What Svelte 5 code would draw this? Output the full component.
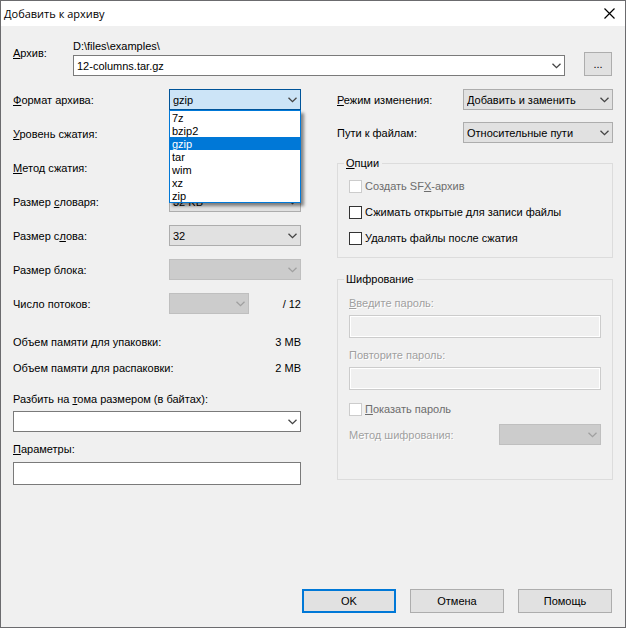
<script>
  const formats = ['7z', 'bzip2', 'gzip', 'tar', 'wim', 'xz', 'zip'];
  let format = $state('gzip');
  let archive = $state('12-columns.tar.gz');
  let volume = $state('');
  let parameters = $state('');
</script>

{#snippet chevron()}
  <svg class="chevron" viewBox="0 0 9 6" aria-hidden="true"><path d="M0.5 0.7 L4.5 4.7 L8.5 0.7" /></svg>
{/snippet}

<div class="window">
  <header>
    <h1>Добавить к архиву</h1>
    <button class="close" aria-label="Закрыть">
      <svg viewBox="0 0 11 11" aria-hidden="true"><path d="M0.5 0.5 L10.5 10.5 M10.5 0.5 L0.5 10.5" /></svg>
    </button>
  </header>

  <main>
    <div class="archive">
      <label for="archive"><u>А</u>рхив:</label>
      <div class="path">
        <span>D:\files\examples\</span>
        <div class="combo">
          <input id="archive" type="text" bind:value={archive} />
          {@render chevron()}
        </div>
      </div>
      <button class="browse">...</button>
    </div>

    <div class="columns">
      <section>
        <div class="row">
          <label for="format"><u>Ф</u>ормат архива:</label>
          <div class="combo narrow open">
            <select id="format" bind:value={format}>
              {#each formats as name}<option>{name}</option>{/each}
            </select>
            {@render chevron()}
            <ul role="listbox" aria-label="Формат архива">
              {#each formats as name}
                <li role="option" aria-selected={name === format}>{name}</li>
              {/each}
            </ul>
          </div>
        </div>
        <div class="row">
          <label for="level"><u>У</u>ровень сжатия:</label>
          <div class="combo narrow"><select id="level"><option>Нормальный</option></select>{@render chevron()}</div>
        </div>
        <div class="row">
          <label for="method"><u>М</u>етод сжатия:</label>
          <div class="combo narrow"><select id="method"><option>Deflate</option></select>{@render chevron()}</div>
        </div>
        <div class="row">
          <label for="dictionary">Размер <u>с</u>ловаря:</label>
          <div class="combo narrow"><select id="dictionary"><option>32 KB</option></select>{@render chevron()}</div>
        </div>
        <div class="row">
          <label for="word">Размер с<u>л</u>ова:</label>
          <div class="combo narrow"><select id="word"><option>32</option></select>{@render chevron()}</div>
        </div>
        <div class="row">
          <label for="block">Размер блока:</label>
          <div class="combo narrow"><select id="block" disabled></select>{@render chevron()}</div>
        </div>
        <div class="row">
          <label for="threads">Число потоков:</label>
          <div class="threads">
            <div class="combo"><select id="threads" disabled></select>{@render chevron()}</div>
            <span>/ 12</span>
          </div>
        </div>

        <div class="memory"><span>Объем памяти для упаковки:</span><span>3 MB</span></div>
        <div class="memory"><span>Объем памяти для распаковки:</span><span>2 MB</span></div>

        <div class="field">
          <label for="volume">Разбить на <u>т</u>ома размером (в байтах):</label>
          <div class="combo"><input id="volume" type="text" bind:value={volume} />{@render chevron()}</div>
        </div>
        <div class="field tall">
          <label for="parameters"><u>П</u>араметры:</label>
          <input id="parameters" type="text" bind:value={parameters} />
        </div>
      </section>

      <section>
        <div class="row">
          <label for="update"><u>Р</u>ежим изменения:</label>
          <div class="combo wide"><select id="update"><option>Добавить и заменить</option></select>{@render chevron()}</div>
        </div>
        <div class="row">
          <label for="paths">Пути к файлам:</label>
          <div class="combo wide"><select id="paths"><option>Относительные пути</option></select>{@render chevron()}</div>
        </div>

        <fieldset class="options">
          <legend><u>О</u>пции</legend>
          <label class="check off"><input type="checkbox" disabled /><span>Создать SF<u>X</u>-архив</span></label>
          <label class="check"><input type="checkbox" /><span>Сжимать открытые для записи файлы</span></label>
          <label class="check"><input type="checkbox" /><span>Удалять файлы после сжатия</span></label>
        </fieldset>

        <fieldset class="encryption">
          <legend>Шифрование</legend>
          <label class="etched" for="password"><u>В</u>ведите пароль:</label>
          <input id="password" type="password" disabled />
          <label class="etched" for="repeat">Повторите пароль:</label>
          <input id="repeat" type="password" disabled />
          <label class="check off"><input type="checkbox" disabled /><span><u>П</u>оказать пароль</span></label>
          <div class="cipher">
            <label class="etched" for="cipher">Метод шифрования:</label>
            <div class="combo"><select id="cipher" disabled></select>{@render chevron()}</div>
          </div>
        </fieldset>
      </section>
    </div>

    <footer>
      <button class="default">OK</button>
      <button>Отмена</button>
      <button>Помощь</button>
    </footer>
  </main>
</div>

<style>
  .window {
    display: flex;
    flex-direction: column;
    box-sizing: border-box;
    min-height: 100vh;
    border: 1px solid #6b6b6e;
    background: #f0f0f0;
    color: #000;
    font: 11px/14px 'Liberation Sans', Arial, sans-serif;
  }
  .window :global(*) { box-sizing: border-box; }
  header {
    display: flex;
    align-items: center;
    justify-content: space-between;
    height: 25px;
    padding: 0 10px 0 3px;
    background: #fff;
  }
  h1 {
    margin: 0;
    font: 11px/16px 'Open Sans', 'Noto Sans', sans-serif;
  }
  button, input, select { font: inherit; color: inherit; }
  .close {
    display: flex;
    padding: 0;
    border: 0;
    background: none;
  }
  .close svg { width: 11px; height: 11px; stroke: #000; stroke-width: 1.2; }
  main {
    display: flex;
    flex: 1;
    flex-direction: column;
    padding: 13px 12px 14px;
  }
  u { text-underline-offset: 1px; text-decoration-thickness: 1px; }

  .archive { display: flex; align-items: flex-end; padding-right: 1px; }
  .archive > label { width: 60px; margin-bottom: 16px; }
  .path { flex: 1; }
  .path span { display: block; height: 16px; }
  .browse { width: 28px; height: 24px; margin-left: 19px; padding: 0; }

  .columns {
    display: grid;
    grid-template-columns: 288fr 276fr;
    gap: 36px;
    margin-top: 13px;
  }
  .row { display: flex; align-items: center; justify-content: space-between; height: 21px; }
  .row + .row { margin-top: 13px; }
  section + section .row + .row { margin-top: 12px; }

  .combo { position: relative; height: 21px; }
  .narrow { width: 132px; }
  .wide { width: 150px; }
  select, input[type='text'], input[type='password'] {
    display: block;
    width: 100%;
    height: 21px;
    margin: 0;
    padding: 0 20px 0 3px;
    border: 1px solid #adadad;
    border-radius: 0;
    outline: 0;
    background: #e1e1e1;
    appearance: none;
  }
  input[type='text'] { border-color: #7a7a7a; background: #fff; }
  select:disabled { border-color: #bfbfbf; background: #ccc; opacity: 1; }
  .open select { border-color: #005499; background: #cce4f7; }
  .chevron {
    position: absolute;
    top: 8px;
    right: 4px;
    width: 9px;
    height: 6px;
    fill: none;
    stroke: #444;
    stroke-width: 1.3;
    pointer-events: none;
  }
  select:disabled + .chevron { stroke: #a0a0a0; }
  ul {
    position: absolute;
    z-index: 1;
    top: 21px;
    left: 0;
    width: 100%;
    margin: 0;
    padding: 0;
    border: 1px solid #0078d7;
    background: #fff;
    box-shadow: 3px 3px 3px rgb(0 0 0 / 45%);
    list-style: none;
  }
  li { height: 13px; padding: 0 2px; line-height: 15px; }
  li[aria-selected='true'] { background: #0078d7; color: #fff; }

  .threads { display: flex; flex: none; align-items: center; justify-content: space-between; width: 132px; }
  .threads .combo { width: 80px; }
  .memory { display: flex; justify-content: space-between; margin-top: 12px; }
  .row + .memory { margin-top: 21px; }
  .field { margin-top: 17px; }
  .field label { display: block; margin-bottom: 5px; }
  .field + .field { margin-top: 10px; }
  .tall label { margin-bottom: 6px; }
  .tall input { height: 23px; }

  fieldset {
    min-width: 0;
    margin: 0;
    border: 1px solid #dcdcdc;
    padding: 0 11px;
  }
  legend { margin-left: -5px; padding: 0 3px 0 2px; }
  .options { margin-top: 13px; padding-top: 9px; padding-bottom: 12px; }
  .encryption { margin-top: 14px; padding-top: 10px; padding-bottom: 34px; }
  .check { display: flex; align-items: center; gap: 3px; height: 14px; }
  .check + .check { margin-top: 12px; }
  .check input {
    width: 13px;
    height: 13px;
    margin: 0;
    border: 1px solid #333;
    background: #fff;
    appearance: none;
  }
  .check input:checked { background: #333; }
  .check.off { color: #6d6d6d; }
  .check.off input { border-color: #ccc; }
  .etched { display: block; color: #a0a0a0; text-shadow: 1px 1px #fff; }
  input[type='password'] {
    height: 23px;
    margin: 5px 0 10px;
    border-color: #ccc;
    background: #f0f0f0;
    box-shadow: inset 0 0 0 1px #fff;
  }
  .encryption .check { margin-top: 12px; }
  .cipher { display: flex; align-items: center; justify-content: space-between; margin-top: 8px; }
  .cipher .combo { width: 102px; }

  footer { display: flex; justify-content: flex-end; gap: 14px; margin-top: auto; padding-right: 1px; }
  footer button { width: 94px; height: 24px; }
  footer button, .browse { border: 1px solid #adadad; background: #e1e1e1; }
  footer .default { border: 2px solid #0078d7; }
</style>
